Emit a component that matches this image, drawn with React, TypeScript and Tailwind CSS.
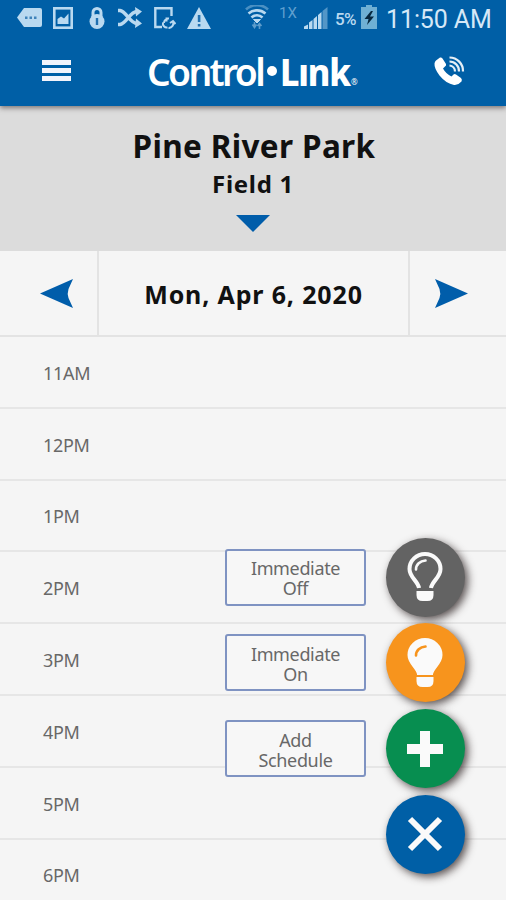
import type { ReactNode } from "react";

const hours = ["11AM", "12PM", "1PM", "2PM", "3PM", "4PM", "5PM", "6PM"];

function StatusBar() {
  return (
    <div className="flex h-[37px] items-start pl-[17px] pt-[5px] text-[#b9d9f0]">
      <svg className="mt-[3px] h-5 w-[25px]" viewBox="0 0 25 20" fill="currentColor">
        <path d="M7 0H23Q25 0 25 2V17Q25 19 23 19H7L0 9.500Z" />
        <path d="M8 8.500h2.500v2.500H8zM12.500 8.500H15v2.500h-2.500zM17 8.500h2.500v2.500H17z" fill="#3f83ba" />
      </svg>
      <svg className="ml-[11px] mt-[2px] h-[22px] w-5" viewBox="0 0 20 22">
        <rect x="1.300" y="1.300" width="17.400" height="19.400" fill="none" stroke="currentColor" strokeWidth="2.600" />
        <path d="M4.500 17V12L8 9.500l3 2 4.500-5V17Z" fill="currentColor" />
      </svg>
      <svg className="ml-[16px] mt-[2px] h-[22px] w-4" viewBox="0 0 16 22">
        <path d="M4 10V5.500a4 4 0 0 1 8 0V10" fill="none" stroke="currentColor" strokeWidth="3" />
        <circle cx="8" cy="14.500" r="7.500" fill="currentColor" />
        <path d="M6.800 11h2.400v7H6.800z" fill="#2070b0" />
      </svg>
      <svg className="ml-[13px] mt-[2px] h-[22px] w-6" viewBox="0 0 24 22" fill="none" stroke="currentColor" strokeWidth="3.400">
        <path d="M0 3.500h2C8 4 12 16.500 19 16.500M0 17.500h2C8 17 12 4.500 19 4.500" />
        <path d="M17 0 24 4.500l-6 5zM18 11.500l6 5-7 4.500z" fill="currentColor" stroke="none" />
      </svg>
      <svg className="ml-[12px] mt-[2px] h-[22px] w-[22px]" viewBox="0 0 22 22" fill="none" stroke="currentColor">
        <path d="M17.500 9V1.300H1.300V20H8" strokeWidth="2.400" />
        <path d="M12.500 10.500v4M10 16a4.500 4.500 0 0 1 5-4.500M14.500 21a4.500 4.500 0 0 0 4.500-6M16 16l3-2 2.500 3" strokeWidth="2" />
        <path d="M9 15.500a4 4 0 0 0 4.500 5" strokeWidth="2" />
      </svg>
      <svg className="ml-[11px] mt-[2px] h-[22px] w-6" viewBox="0 0 24 22">
        <path d="M12 0 24 22H0Z" fill="currentColor" />
        <path d="M10.800 8h2.600v7h-2.600zM10.800 17h2.600v2.500h-2.600z" fill="#2070b0" />
      </svg>
      <svg className="ml-[34px] h-[25px] w-[24px]" viewBox="0 0 24 25" fill="none" stroke="currentColor">
        <path d="M1 4.500a16 16 0 0 1 22 0" strokeWidth="2.600" opacity=".4" />
        <path d="M3.500 8.500a13 13 0 0 1 17 0M6.500 12.500a8 8 0 0 1 11 0" strokeWidth="2.600" />
        <path d="M8.500 14.500 12 18l3.500-3.500Z" fill="currentColor" />
        <path d="M9.500 17v5M7.500 19.500l2 3 2-3M14.500 24v-5M12.500 21l2-2.500 2 2.500" strokeWidth="1.600" opacity=".5" />
      </svg>
      <span className="ml-[10px] w-[17px] font-['Roboto'] text-[15px] leading-[16px] text-[#5f9fcf]">1X</span>
      <svg className="ml-[8px] mt-[2px] h-[22px] w-6" viewBox="0 0 24 22" fill="currentColor">
        <path d="M0 19.500 4 17.500V22H0zM5 15.500 8.500 13V22H5zM9.500 12 13 9v13H9.500zM14 8l3.500-3v17H14z" />
        <path d="M18.500 4 23.500 0v22h-5z" opacity=".45" />
      </svg>
      <span className="ml-[7px] mt-[5px] w-[24px] whitespace-nowrap font-['Roboto'] text-[17px] font-medium leading-[18px] tracking-[-0.600px]">5%</span>
      <svg className="ml-[2px] h-6 w-4" viewBox="0 0 16 24">
        <path d="M5 0h6v2h5v22H0V2h5z" fill="#6fb0d4" />
        <path d="M10 6 3.500 14h4L6 20l7-8.500H9L12 6z" fill="#07283f" />
      </svg>
      <span className="ml-[9px] whitespace-nowrap font-['Roboto'] text-[25px] leading-[29px] tracking-[-0.100px] text-[#d5e8f7]">11:50 AM</span>
    </div>
  );
}

function Header() {
  return (
    <header className="relative z-10 h-[106px] bg-[#005fa6] shadow-[0_2px_5px_rgba(60,50,50,0.6)]">
      <StatusBar />
      <div className="flex h-[68px] items-start text-white">
        <button className="ml-[42px] mt-[23px] flex w-[29px] flex-col gap-[3px]">
          <span className="h-[5px] w-full bg-[#f3f4fb]" />
          <span className="h-[5px] w-full bg-[#f3f4fb]" />
          <span className="h-[5px] w-full bg-[#f3f4fb]" />
        </button>
        <h1 className="ml-[76px] mt-[9px] flex w-[212px] items-center whitespace-nowrap font-['Noto_Sans'] text-[38px] leading-[50px]">
          <span className="w-[120px] shrink-0 origin-left scale-x-[.98] font-semibold tracking-[-2.700px]">Control</span>
          <span className="h-[10px] w-[10px] shrink-0 rounded-full bg-white" />
          <span className="ml-[3px] w-[71px] shrink-0 origin-left scale-x-90 font-extrabold tracking-[-1.300px]">Lınk</span>
          <span className="mt-[21px] text-[8px] leading-[8px]">®</span>
        </h1>
        <svg className="ml-[75px] mt-[19px] h-[30px] w-[31px]" viewBox="0 0 31 30">
          <path
            d="M2 4.500 6 1.500Q7.500 1 8.500 2.500L12 8Q12.500 9.500 11 10.500L9 12.500Q12 18 17.500 20.500L19.500 18.500Q20.500 17.500 22 18.500L27 22Q28.500 23.500 27.500 25.500Q24 29.500 20 29Q12 27.500 5.500 19.500Q0 12 .5 7.500Q.8 5.500 2 4.500Z"
            fill="currentColor"
          />
          <path d="M15.500 9.500a6 6 0 0 1 5.500 6M15.500 5.500a9.500 9.500 0 0 1 9.500 10M15.500 1.500A13.500 13.500 0 0 1 29 15.500" fill="none" stroke="currentColor" strokeWidth="2.200" opacity=".9" />
        </svg>
      </div>
    </header>
  );
}

function BulbIcon({ filled = false }: { filled?: boolean }) {
  return (
    <svg className="mr-[2px] h-[50px] w-[36px]" viewBox="0 0 36 50" fill="none">
      <path
        d="M12 36C11 29 2.500 25.500 2.500 17a15.500 15 0 0 1 31 0C33.500 25.500 25 29 24 36"
        stroke="#fafafa"
        strokeWidth="4"
        fill={filled ? "#fafafa" : "none"}
      />
      {filled && <path d="M10 33h16v4H10z" fill="#fafafa" />}
      <path d="M9 17.500c0-5 4-8.500 9.500-9" stroke={filled ? "#f7941d" : "#fafafa"} strokeWidth="2.600" strokeLinecap="round" />
      <path d="M9.500 39h17v4q0 6-6 6h-5q-6 0-6-6z" fill="#fafafa" />
    </svg>
  );
}

type ActionProps = { label?: string; color: string; children: ReactNode };

function Action({ label, color, children }: ActionProps) {
  return (
    <div className="flex items-center justify-end">
      {label && (
        <div className="mr-[20px] flex h-[57px] w-[141px] items-center justify-center rounded-[3px] border-2 border-[#7f93c2] bg-[#f7f7f7] pt-[2px]">
          <p className="w-[100px] text-center font-['Noto_Sans'] text-[18px] leading-[20px] tracking-[-0.350px] text-[#686868]">{label}</p>
        </div>
      )}
      <button className={`flex h-[79px] w-[79px] items-center justify-center rounded-full shadow-[3px_3px_8px_rgba(50,40,40,0.8)] ${color}`}>
        {children}
      </button>
    </div>
  );
}

export default function App() {
  return (
    <div className="h-[900px] w-[506px] overflow-hidden bg-[#f5f5f5]">
      <Header />

      <section className="flex h-[145px] flex-col items-center bg-[#dcdcdc] font-['Noto_Sans'] font-bold text-[#111]">
        <h2 className="mt-[20px] whitespace-nowrap pl-[2px] text-[31.500px] leading-[40px] tracking-[0.350px]">Pine River Park</h2>
        <p className="mt-[3px] text-[24px] leading-[30px] tracking-[0.700px]">Field 1</p>
        <svg className="mt-[16px] h-[17px] w-[34px]" viewBox="0 0 34 17">
          <path d="M0 0h34L17 17Z" fill="#005daa" />
        </svg>
      </section>

      <div className="grid h-[86px] grid-cols-[99px_311px_96px] border-b-2 border-[#e3e3e3]">
        <button className="flex items-center justify-center border-r-2 border-[#e3e3e3] pl-[16px]">
          <svg className="h-[29px] w-[33px]" viewBox="0 0 33 29">
            <path d="M0 14.500 33 0 28.500 10Q27 14.500 28.500 19L33 29Z" fill="#005daa" />
          </svg>
        </button>
        <div className="flex items-center justify-center border-r-2 border-[#e3e3e3] pt-[3px] font-['Noto_Sans'] text-[25px] font-bold tracking-[0.850px] text-[#111]">
          Mon, Apr 6, 2020
        </div>
        <button className="flex items-center pl-[25px]">
          <svg className="h-[29px] w-[33px]" viewBox="0 0 33 29">
            <path d="M33 14.500 0 0 4.500 10Q6 14.500 4.500 19L0 29Z" fill="#005daa" />
          </svg>
        </button>
      </div>

      <main className="relative h-[563px]">
        {hours.map((hour) => (
          <div
            key={hour}
            className="flex h-[71.800px] items-center border-b-2 border-[#e6e6e6] pl-[43px] pt-[3px] font-['Noto_Sans'] text-[18px] tracking-[-0.300px] text-[#686868]"
          >
            {hour}
          </div>
        ))}

        {/* Floating actions */}
        <div className="absolute right-[41px] top-[200.500px] flex flex-col gap-[6.800px]">
          <Action label="Immediate Off" color="bg-[#636363]">
            <BulbIcon />
          </Action>
          <Action label="Immediate On" color="bg-[#f7941d]">
            <BulbIcon filled />
          </Action>
          <Action label="Add Schedule" color="bg-[#078e50]">
            <svg className="mr-px h-[36px] w-[36px]" viewBox="0 0 36 36">
              <path d="M18 0v36M0 18h36" stroke="#fafafa" strokeWidth="10" />
            </svg>
          </Action>
          <Action color="bg-[#005fa6]">
            <svg className="mr-px h-[36px] w-[36px]" viewBox="0 0 36 36">
              <path d="m3 3 30 30M33 3 3 33" stroke="#fafafa" strokeWidth="6" />
            </svg>
          </Action>
        </div>
      </main>
    </div>
  );
}
